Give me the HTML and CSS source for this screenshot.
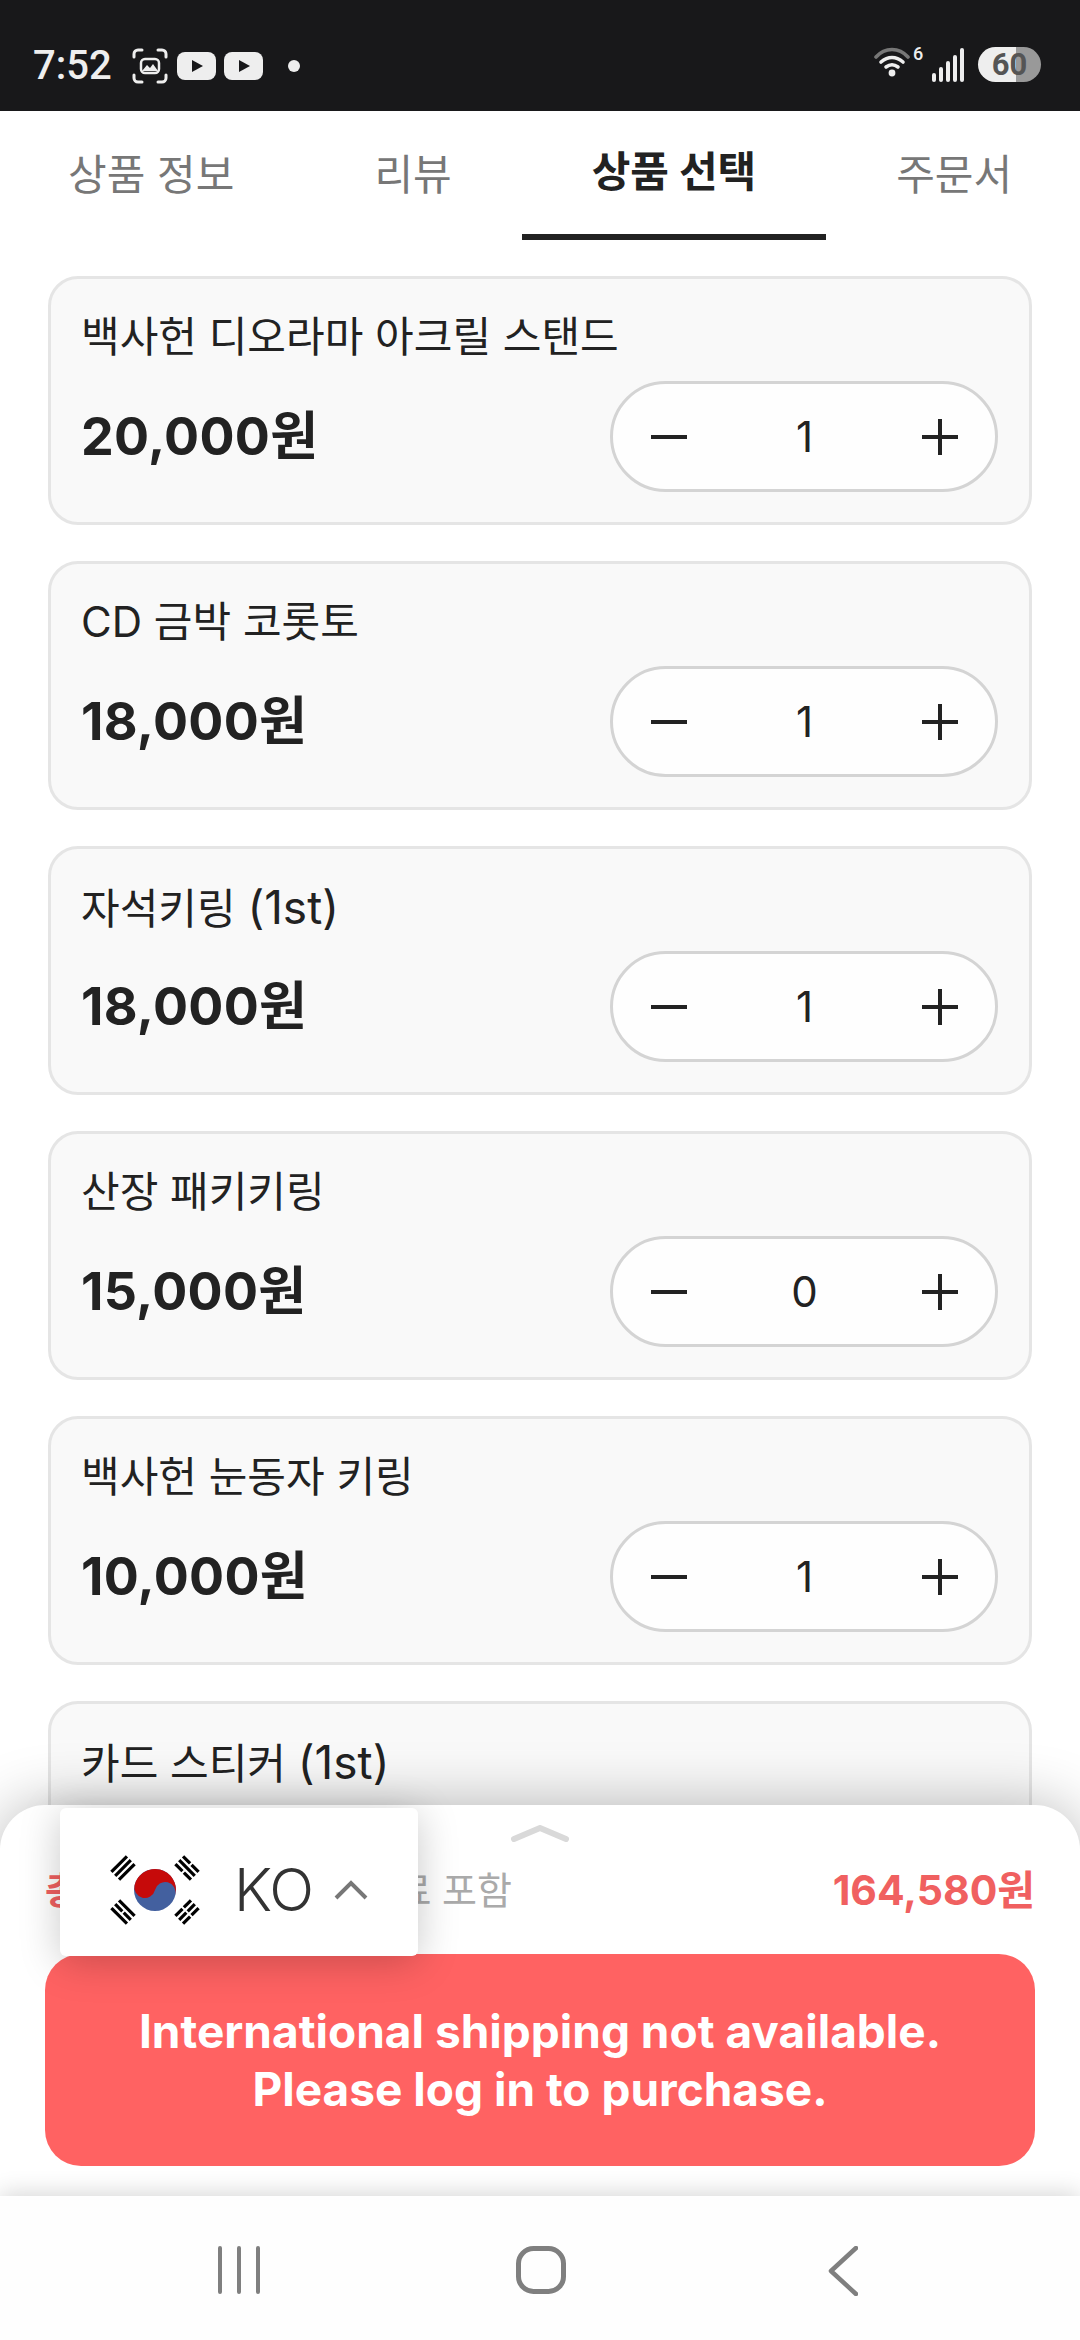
FILE: index.html
```html
<!DOCTYPE html>
<html lang="ko">
<head>
<meta charset="utf-8">
<title>상품 선택</title>
<link rel="stylesheet" href="styles.css">
</head>
<body>
<div class="app">
  <header class="status">
    <span class="time">7:52</span>
    <svg class="ic-shot" width="36" height="36" viewBox="0 0 36 36"><g fill="none" stroke="#eee" stroke-width="3" stroke-linecap="round"><path d="M2 9V6a4 4 0 0 1 4-4h4M26 2h4a4 4 0 0 1 4 4v3M34 27v3a4 4 0 0 1-4 4h-4M10 34H6a4 4 0 0 1-4-4v-3"/></g><rect x="9" y="11" width="18" height="14" rx="4" fill="none" stroke="#eee" stroke-width="2.500"/><path d="M10 23l5-6 3 3 3-4 5 7z" fill="#eee"/></svg>
    <svg class="ic-yt" width="39" height="28" viewBox="0 0 39 28"><rect width="39" height="28" rx="8" fill="#eee"/><path d="M15 8l11 6-11 6z" fill="#18181a"/></svg>
    <svg class="ic-yt2" width="39" height="28" viewBox="0 0 39 28"><rect width="39" height="28" rx="8" fill="#eee"/><path d="M15 8l11 6-11 6z" fill="#18181a"/></svg>
    <span class="dot"></span>
    <span class="status-right">
      <svg class="ic-wifi" width="56" height="36" viewBox="0 -6 56 36"><g fill="none" stroke-linecap="round" stroke-width="3.600"><path d="M2 9C11 -1 25 -1 34 9" stroke="#777"/><path d="M7 14c7-6 15-6 22 0" stroke="#eee"/><path d="M12 19c4-3 8-3 12 0" stroke="#eee"/></g><circle cx="18" cy="25" r="3.400" fill="#eee"/><text class="wifi-six" x="39" y="12">6</text></svg>
      <svg class="ic-signal" width="33" height="34" viewBox="0 0 33 34"><g fill="#eee"><rect x="0" y="25" width="4" height="9" rx="2"/><rect x="7" y="19" width="4" height="15" rx="2"/><rect x="14" y="13" width="4" height="21" rx="2"/><rect x="21" y="7" width="4" height="27" rx="2"/><rect x="28" y="0" width="4" height="34" rx="2"/></g></svg>
      <span class="battery"><span class="battery-text">60</span></span>
    </span>
  </header>

  <nav class="tabs">
    <span class="tab">상품 정보</span>
    <span class="tab">리뷰</span>
    <span class="tab tab-active">상품 선택</span>
    <span class="tab">주문서</span>
  </nav>

  <main class="list">
    <section class="card">
      <div class="name">백사헌 디오라마 아크릴 스탠드</div>
      <div class="row"><span class="price">20,000원</span>
        <div class="stepper">
          <svg width="36" height="36" viewBox="0 0 36 36"><path d="M0 18h36" class="stroke"/></svg>
          <span class="qty">1</span>
          <svg width="36" height="36" viewBox="0 0 36 36"><path d="M0 18h36M18 0v36" class="stroke"/></svg>
        </div>
      </div>
    </section>
    <section class="card">
      <div class="name">CD 금박 코롯토</div>
      <div class="row"><span class="price">18,000원</span>
        <div class="stepper">
          <svg width="36" height="36" viewBox="0 0 36 36"><path d="M0 18h36" class="stroke"/></svg>
          <span class="qty">1</span>
          <svg width="36" height="36" viewBox="0 0 36 36"><path d="M0 18h36M18 0v36" class="stroke"/></svg>
        </div>
      </div>
    </section>
    <section class="card">
      <div class="name">자석키링 <span class="lat">(1st)</span></div>
      <div class="row"><span class="price">18,000원</span>
        <div class="stepper">
          <svg width="36" height="36" viewBox="0 0 36 36"><path d="M0 18h36" class="stroke"/></svg>
          <span class="qty">1</span>
          <svg width="36" height="36" viewBox="0 0 36 36"><path d="M0 18h36M18 0v36" class="stroke"/></svg>
        </div>
      </div>
    </section>
    <section class="card">
      <div class="name">산장 패키키링</div>
      <div class="row"><span class="price">15,000원</span>
        <div class="stepper">
          <svg width="36" height="36" viewBox="0 0 36 36"><path d="M0 18h36" class="stroke"/></svg>
          <span class="qty">0</span>
          <svg width="36" height="36" viewBox="0 0 36 36"><path d="M0 18h36M18 0v36" class="stroke"/></svg>
        </div>
      </div>
    </section>
    <section class="card">
      <div class="name">백사헌 눈동자 키링</div>
      <div class="row"><span class="price">10,000원</span>
        <div class="stepper">
          <svg width="36" height="36" viewBox="0 0 36 36"><path d="M0 18h36" class="stroke"/></svg>
          <span class="qty">1</span>
          <svg width="36" height="36" viewBox="0 0 36 36"><path d="M0 18h36M18 0v36" class="stroke"/></svg>
        </div>
      </div>
    </section>
    <section class="card">
      <div class="name">카드 스티커 <span class="lat">(1st)</span></div>
    </section>
  </main>

  <aside class="sheet">
    <svg class="handle" width="60" height="18" viewBox="0 0 60 18"><path d="M4 14L30 3l26 11" fill="none" stroke="#d9d9d9" stroke-width="6" stroke-linecap="round" stroke-linejoin="round"/></svg>
    <div class="total">
      <span class="total-label"><b class="total-strong">총 결제금액</b> <span class="total-note">배송료 포함</span></span>
      <span class="total-price">164,580원</span>
    </div>
    <button class="cta">International shipping not available.<br>Please log in to purchase.</button>
  </aside>

  <div class="lang">
    <svg class="flag" width="90" height="72" viewBox="-45 -36 90 72">
      <circle r="21" fill="#43609f"/>
      <g transform="rotate(14)">
        <path d="M-21 0a21 21 0 0 1 42 0a10.500 10.500 0 0 0-21 0a10.500 10.500 0 0 1-21 0z" fill="#c60a0a"/>
      </g>
      <g fill="#000">
        <g transform="translate(-32 -22) rotate(-45)"><rect x="-11" y="-7" width="22" height="3.200"/><rect x="-11" y="-1.600" width="22" height="3.200"/><rect x="-11" y="3.800" width="22" height="3.200"/></g>
        <g transform="translate(32 -22) rotate(45)"><rect x="-11" y="-7" width="10" height="3.200"/><rect x="1" y="-7" width="10" height="3.200"/><rect x="-11" y="-1.600" width="22" height="3.200"/><rect x="-11" y="3.800" width="10" height="3.200"/><rect x="1" y="3.800" width="10" height="3.200"/></g>
        <g transform="translate(-32 22) rotate(45)"><rect x="-11" y="-7" width="22" height="3.200"/><rect x="-11" y="-1.600" width="10" height="3.200"/><rect x="1" y="-1.600" width="10" height="3.200"/><rect x="-11" y="3.800" width="22" height="3.200"/></g>
        <g transform="translate(32 22) rotate(-45)"><rect x="-11" y="-7" width="10" height="3.200"/><rect x="1" y="-7" width="10" height="3.200"/><rect x="-11" y="-1.600" width="10" height="3.200"/><rect x="1" y="-1.600" width="10" height="3.200"/><rect x="-11" y="3.800" width="10" height="3.200"/><rect x="1" y="3.800" width="10" height="3.200"/></g>
      </g>
    </svg>
    <span class="lang-code">KO</span>
    <svg class="lang-chev" width="34" height="20" viewBox="0 0 34 20"><path d="M2 18L17 3l15 15" fill="none" stroke="#777" stroke-width="4"/></svg>
  </div>

  <footer class="navbar">
    <svg width="44" height="48" viewBox="0 0 44 48"><path d="M3 2v44M22 2v44M41 2v44" stroke="#7f7f7f" stroke-width="4" stroke-linecap="round"/></svg>
    <svg width="50" height="48" viewBox="0 0 50 48"><rect x="2.500" y="2.500" width="45" height="43" rx="15" fill="none" stroke="#7f7f7f" stroke-width="5"/></svg>
    <svg class="nav-back" width="30" height="50" viewBox="0 0 30 50"><path d="M28 2L3 25l25 23" fill="none" stroke="#7f7f7f" stroke-width="4.500" stroke-linecap="round" stroke-linejoin="round"/></svg>
  </footer>
</div>
</body>
</html>
```
FILE: styles.css
```css
* { box-sizing: border-box; }
html, body { margin: 0; padding: 0; }
body {
  width: 1080px;
  height: 2340px;
  overflow: hidden;
  background: #fff;
  font-family: Inter, "Noto Sans CJK KR", sans-serif;
  color: #222;
}
.app {
  position: relative;
  width: 1080px;
  height: 2340px;
  display: flex;
  flex-direction: column;
  overflow: hidden;
}

/* status bar */
.status {
  height: 111px;
  flex: none;
  background: #18181a;
  display: flex;
  align-items: center;
  padding: 20px 39px 0 33px;
  color: #eee;
}
.time { font: 500 40px/1 Roboto, sans-serif; width: 99px; }
.ic-shot { flex: none; }
.ic-yt { flex: none; margin-left: 9px; }
.ic-yt2 { flex: none; margin-left: 8px; }
.dot { width: 12px; height: 12px; border-radius: 50%; background: #eee; margin-left: 25px; }
.status-right { margin-left: auto; display: flex; align-items: center; }
.ic-wifi { margin-right: 2px; margin-top: -11px; }
.wifi-six { font: 500 18px Roboto, sans-serif; fill: #eee; }
.ic-signal { margin-right: 13px; margin-top: -2px; }
.battery {
  width: 63px;
  height: 35px;
  border-radius: 18px;
  background: linear-gradient(90deg, #eee 0, #eee 38px, #999 38px, #999 100%);
  display: flex;
  align-items: center;
  justify-content: center;
  margin-top: -2px;
}
.battery-text { font: 700 31px/1 Roboto, sans-serif; color: #555; }

/* tabs */
.tabs {
  height: 129px;
  flex: none;
  display: flex;
  align-items: flex-start;
  margin-left: -2px;
  font-size: 42px;
  white-space: nowrap;
}
.tab {
  color: #777;
  line-height: 48px;
  margin-top: 40px;
  padding: 0 70px;
}
.tab-active {
  color: #222;
  font-weight: 700;
  margin-top: 37px;
  height: 92px;
  border-bottom: 6px solid #222;
}

/* product list */
.list {
  flex: 1;
  min-height: 0;
  padding: 36px 48px 0;
  display: flex;
  flex-direction: column;
  gap: 36px;
  overflow: hidden;
}
.card {
  flex: none;
  height: 249px;
  border: 3px solid #e5e5e5;
  border-radius: 30px;
  background: #f9f9f9;
  padding: 33px 31px 0 30px;
}
.name { font-size: 42px; line-height: 50px; height: 50px; }
.lat { font-size: 46px; }
.row {
  display: flex;
  justify-content: space-between;
  align-items: center;
  margin-top: 19px;
}
.price { font-size: 52px; font-weight: 700; line-height: 64px; letter-spacing: 0.3px; }
.stepper {
  width: 388px;
  height: 111px;
  border: 3px solid #d4d4d4;
  border-radius: 56px;
  background: #fefefe;
  display: flex;
  align-items: center;
  justify-content: space-between;
  padding: 0 37px 0 38px;
}
.stroke { fill: none; stroke: #222; stroke-width: 4; }
.qty { font-size: 42px; line-height: 48px; }

/* bottom sheet, lies over the list */
.sheet {
  position: absolute;
  left: 0;
  right: 0;
  top: 1805px;
  height: 391px;
  background: #fff;
  border-radius: 45px 45px 0 0;
  box-shadow: 0 0 60px rgba(0, 0, 0, 0.28);
  padding: 0 45px;
}
.handle { display: block; margin: 20px auto 0; }
.total {
  display: flex;
  justify-content: space-between;
  align-items: center;
  margin-top: 20px;
  height: 48px;
  white-space: nowrap;
}
.total-label { font-size: 38px; }
.total-strong { color: #f06060; font-weight: 700; margin-right: 87px; }
.total-note { color: #aaa; }
.total-price { font-size: 41px; font-weight: 700; color: #f06060; }
.cta {
  display: block;
  width: 990px;
  height: 212px;
  margin-top: 43px;
  border: 0;
  border-radius: 36px;
  background: #ff6262;
  color: #fff;
  font: 700 46px/58px Inter, sans-serif;
  text-align: center;
  padding: 0;
}

/* language popup */
.lang {
  position: absolute;
  left: 60px;
  top: 1808px;
  width: 358px;
  height: 148px;
  background: #fff;
  border-radius: 6px;
  box-shadow: 0 6px 40px rgba(0, 0, 0, 0.22);
  display: flex;
  align-items: center;
  padding: 15px 0 0 50px;
}
.flag { flex: none; }
.lang-code { font: 300 59px/1 Inter, sans-serif; letter-spacing: -1px; color: #333; margin-left: 34px; }
.lang-chev { margin-left: 21px; }

/* android nav */
.navbar {
  height: 144px;
  flex: none;
  position: relative;
  background: #fefefe;
  box-shadow: 0 -3px 22px rgba(0, 0, 0, 0.16);
  display: flex;
  align-items: flex-start;
  padding: 50px 0 0 217px;
  gap: 255px;
}
.nav-back { margin-left: 7px; }
```
